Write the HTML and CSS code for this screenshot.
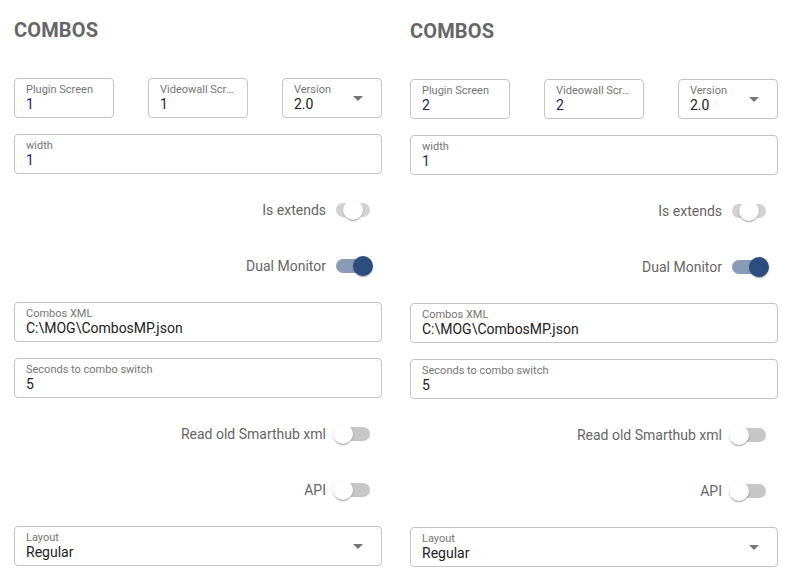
FILE: index.html
```html
<!DOCTYPE html>
<html>
<head>
<meta charset="utf-8">
<link rel="stylesheet" href="styles.css">
</head>
<body>
<div class="page">
  <section class="col">
    <h2 class="title">COMBOS</h2>
    <div class="trio">
      <div class="field"><span class="flabel">Plugin Screen</span><span class="fval num">1</span></div>
      <div class="field"><span class="flabel">Videowall Screen</span><span class="fval num">1</span></div>
      <div class="field select"><span class="flabel">Version</span><span class="fval">2.0</span><span class="arrow"></span></div>
    </div>
    <div class="field"><span class="flabel">width</span><span class="fval num">1</span></div>
    <div class="toggle-row"><span class="tlabel">Is extends</span><span class="switch mid"><span class="track"></span><span class="thumb"></span></span></div>
    <div class="toggle-row"><span class="tlabel">Dual Monitor</span><span class="switch on"><span class="track"></span><span class="thumb"></span></span></div>
    <div class="field"><span class="flabel">Combos XML</span><span class="fval">C:\MOG\CombosMP.json</span></div>
    <div class="field"><span class="flabel">Seconds to combo switch</span><span class="fval">5</span></div>
    <div class="toggle-row"><span class="tlabel">Read old Smarthub xml</span><span class="switch"><span class="track"></span><span class="thumb"></span></span></div>
    <div class="toggle-row"><span class="tlabel">API</span><span class="switch"><span class="track"></span><span class="thumb"></span></span></div>
    <div class="field select"><span class="flabel">Layout</span><span class="fval">Regular</span><span class="arrow"></span></div>
  </section>
  <section class="col col-b">
    <h2 class="title">COMBOS</h2>
    <div class="trio">
      <div class="field"><span class="flabel">Plugin Screen</span><span class="fval num">2</span></div>
      <div class="field"><span class="flabel">Videowall Screen</span><span class="fval num">2</span></div>
      <div class="field select"><span class="flabel">Version</span><span class="fval">2.0</span><span class="arrow"></span></div>
    </div>
    <div class="field"><span class="flabel">width</span><span class="fval num">1</span></div>
    <div class="toggle-row"><span class="tlabel">Is extends</span><span class="switch mid"><span class="track"></span><span class="thumb"></span></span></div>
    <div class="toggle-row"><span class="tlabel">Dual Monitor</span><span class="switch on"><span class="track"></span><span class="thumb"></span></span></div>
    <div class="field"><span class="flabel">Combos XML</span><span class="fval">C:\MOG\CombosMP.json</span></div>
    <div class="field"><span class="flabel">Seconds to combo switch</span><span class="fval">5</span></div>
    <div class="toggle-row"><span class="tlabel">Read old Smarthub xml</span><span class="switch"><span class="track"></span><span class="thumb"></span></span></div>
    <div class="toggle-row"><span class="tlabel">API</span><span class="switch"><span class="track"></span><span class="thumb"></span></span></div>
    <div class="field select"><span class="flabel">Layout</span><span class="fval">Regular</span><span class="arrow"></span></div>
  </section>
</div>
</body>
</html>
```
FILE: styles.css
```css
* { box-sizing: border-box; }
html, body { margin: 0; padding: 0; background: #fff; }
body { font-family: Roboto, "Liberation Sans", sans-serif; color: #222; }
.page {
  display: grid;
  grid-template-columns: 368px 368px;
  column-gap: 28px;
  padding: 0 15px 0 14px;
}
.col { display: flex; flex-direction: column; gap: 16px; }
.col-b { padding-top: 1px; }
.title {
  margin: 18px 0 20px 0;
  font-size: 20px;
  line-height: 24px;
  font-weight: 700;
  color: #666;
  letter-spacing: 0.15px;
}
.trio { display: flex; justify-content: space-between; }
.trio .field { width: 100px; }
.field {
  position: relative;
  height: 40px;
  border: 1px solid #c4c4c4;
  border-radius: 4px;
  padding: 4px 11px 0 11px;
  display: flex;
  flex-direction: column;
}
.flabel {
  font-size: 11px;
  line-height: 13px;
  color: #757575;
  white-space: nowrap;
  overflow: hidden;
  text-overflow: ellipsis;
}
.fval {
  font-size: 14px;
  line-height: 16px;
  color: #222;
}
.fval.num { color: #1a1f5c; }
.select .arrow {
  position: absolute;
  right: 18px;
  top: 17px;
  width: 0; height: 0;
  border-left: 5px solid transparent;
  border-right: 5px solid transparent;
  border-top: 5px solid #757575;
}
.toggle-row {
  height: 40px;
  display: flex;
  align-items: center;
  justify-content: flex-end;
  padding-right: 12px;
  gap: 10px;
}
.tlabel { font-size: 14px; color: #666; }
.switch {
  position: relative;
  width: 34px;
  height: 14px;
}
.switch .track {
  display: block;
  width: 34px; height: 14px;
  border-radius: 7px;
  background: #c6c6c6;
}
.switch .thumb {
  position: absolute;
  top: -3px;
  left: -3px;
  width: 20px; height: 20px;
  border-radius: 50%;
  background: #fff;
  box-shadow: 0 2px 1px -1px rgba(0,0,0,.2), 0 1px 1px 0 rgba(0,0,0,.14), 0 1px 3px 0 rgba(0,0,0,.12);
}
.switch.mid .track { background: #d2d2d2; }
.switch.mid .thumb { left: 7px; }
.switch.on .track { background: #8a9bb8; }
.switch.on .thumb { left: 17px; background: #2c4d7f; }
```
